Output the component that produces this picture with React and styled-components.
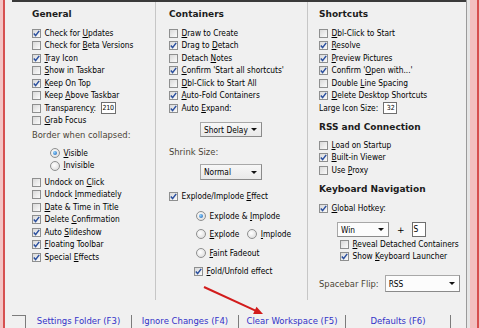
import React from "react";
import styled, { createGlobalStyle } from "styled-components";

const Global = createGlobalStyle`
  html, body { margin: 0; padding: 0; background: #f0f0f0; }
  body { width: 480px; height: 328px; overflow: hidden; }
`;

const LABEL_FONT = `"DejaVu Sans Condensed", "Liberation Sans", sans-serif`;
const VERDANA = `"DejaVu Sans", Verdana, sans-serif`;

const Window = styled.div`
  position: relative;
  display: flex;
  width: 480px;
  height: 328px;
  background: #f0f0f0;
  font-family: ${LABEL_FONT};
  font-size: 8.3px;
  color: #000;
  overflow: hidden;
`;

const LeftEdge = styled.div`
  flex: none;
  width: 5px;
  background: linear-gradient(to right, #f4c4c4 0 3px, #d65050 3px 5px);
`;

const RightEdge = styled.div`
  flex: none;
  width: 14px;
  background: linear-gradient(
    to right,
    #9a9a9a 0 1px,
    #e6e6e6 1px 4px,
    #f3c0c0 4px 11px,
    #d65050 11px 13px,
    #f4c4c4 13px
  );
`;

const Body = styled.div`
  flex: 1;
  min-width: 0;
  display: flex;
  flex-direction: column;
`;

const TopRule = styled.div`
  height: 2px;
  margin-left: 7px;
  background: #3a3a3a;
`;

const Columns = styled.div`
  display: grid;
  grid-template-columns: 151px 152px 1fr;
  align-items: start;
`;

const Column = styled.div`
  box-sizing: border-box;
  height: 298px;
  padding-top: 5px;
  padding-left: ${(p) => p.$pad}px;
  border-right: ${(p) => (p.$divider ? "1px solid #c6c6c6" : "none")};
  display: flex;
  flex-direction: column;
  align-items: flex-start;
`;

const Heading = styled.div`
  font-family: ${VERDANA};
  font-weight: bold;
  font-size: 9px;
  height: 14px;
  line-height: 14px;
  color: #1c1c1c;
  white-space: nowrap;
  margin-top: ${(p) => p.$mt || 0}px;
  margin-bottom: ${(p) => p.$mb || 0}px;
`;

const SubHeading = styled.div`
  font-family: ${VERDANA};
  font-size: 8.4px;
  height: 14px;
  line-height: 14px;
  color: #4b4436;
  white-space: nowrap;
  margin-top: ${(p) => p.$mt || 0}px;
`;

const Row = styled.div`
  display: flex;
  align-items: center;
  gap: ${(p) => p.$gap ?? 3.5}px;
  height: 12.5px;
  line-height: 12.5px;
  white-space: nowrap;
  margin-top: ${(p) => p.$mt || 0}px;
  margin-left: ${(p) => p.$indent || 0}px;
`;

const Opt = styled.span`
  display: flex;
  align-items: center;
  gap: 3.5px;
`;

const Box = styled.span`
  flex: none;
  box-sizing: border-box;
  width: 9px;
  height: 9px;
  border: 1px solid #8e8f8f;
  background: linear-gradient(135deg, #d9d9d9, #fbfbfb);
  display: flex;
  align-items: center;
  justify-content: center;
`;

const Dot = styled.span`
  flex: none;
  box-sizing: border-box;
  width: 10px;
  height: 10px;
  border-radius: 50%;
  border: 1px solid #8e8f8f;
  background: radial-gradient(circle at 40% 40%, #ffffff, #d6d6d6);
  display: flex;
  align-items: center;
  justify-content: center;
  &::after {
    content: "";
    display: ${(p) => (p.$on ? "block" : "none")};
    width: 4px;
    height: 4px;
    border-radius: 50%;
    background: radial-gradient(circle at 35% 35%, #8fd3ff, #1a5cb0);
  }
`;

const Field = styled.span`
  box-sizing: border-box;
  display: inline-flex;
  align-items: center;
  justify-content: ${(p) => p.$align || "flex-start"};
  width: ${(p) => p.$w}px;
  height: ${(p) => p.$h}px;
  padding: 0 1px;
  margin-left: ${(p) => p.$ml || 0}px;
  border: 1px solid #6f6f6f;
  background: #fff;
  font-size: ${(p) => p.$fs || 7}px;
  letter-spacing: ${(p) => (p.$tight ? "-0.3px" : "0")};
  line-height: 1;
  overflow: hidden;
`;

const Select = styled.div`
  box-sizing: border-box;
  display: flex;
  align-items: center;
  justify-content: space-between;
  width: ${(p) => p.$w}px;
  height: ${(p) => p.$h}px;
  margin-top: ${(p) => p.$mt || 0}px;
  margin-left: ${(p) => p.$ml || 0}px;
  padding: 0 4px 0 3px;
  border: 1px solid #8a8a8a;
  border-top-color: #a8a8a8;
  border-left-color: #a8a8a8;
  background: ${(p) => (p.$white ? "#fcfcfc" : "linear-gradient(#f7f7f7, #e9e9e9)")};
  white-space: nowrap;
  font-size: 8.3px;
`;

const Arrow = styled.span`
  width: 0;
  height: 0;
  border-left: 3px solid transparent;
  border-right: 3px solid transparent;
  border-top: 3px solid #111;
`;

const HotkeyLine = styled.div`
  display: flex;
  align-items: center;
  height: 15px;
  margin-top: 7.75px;
  margin-left: 18px;
`;

const Plus = styled.span`
  font-family: ${VERDANA};
  font-size: 9px;
  margin: 0 7px 0 8px;
`;

const FlipLine = styled.div`
  display: flex;
  align-items: center;
  gap: 6px;
  height: 17px;
  margin-top: 12.25px;
`;

const FlipLabel = styled.span`
  font-family: ${VERDANA};
  font-size: 8.4px;
  color: #4b4436;
  white-space: nowrap;
`;

const Bottom = styled.div`
  margin-top: auto;
  height: 15px;
  display: flex;
  align-items: flex-end;
  padding-left: 7px;
`;

const Corner = styled.div`
  box-sizing: border-box;
  width: 14px;
  height: 13px;
  border-top: 1px solid #7c7c7c;
  border-right: 1px solid #7c7c7c;
`;

const Cell = styled.div`
  box-sizing: border-box;
  width: ${(p) => p.$w}px;
  height: 13px;
  line-height: 13px;
  text-align: center;
  border-right: 1px solid #7c7c7c;
  font-family: ${VERDANA};
  font-size: 8.5px;
  color: #3232c8;
  white-space: nowrap;
`;

const Overlay = styled.svg`
  position: absolute;
  left: 0;
  top: 0;
  width: 480px;
  height: 328px;
  pointer-events: none;
`;

const Tick = () => (
  <svg width="7" height="7" viewBox="0 0 7 7">
    <path d="M0.8 3.6 L2.6 5.6 L6.2 0.9" fill="none" stroke="#2a4f9e" strokeWidth="1.5" />
  </svg>
);

const Check = ({ on, children, mt, indent }) => (
  <Row $mt={mt} $indent={indent}>
    <Box>{on && <Tick />}</Box>
    <span>{children}</span>
  </Row>
);

const Radio = ({ on, children, mt, indent }) => (
  <Row $mt={mt} $indent={indent}>
    <Dot $on={on} />
    <span>{children}</span>
  </Row>
);

export default function App() {
  return (
    <>
      <Global />
      <Window>
        <LeftEdge />
        <Body>
          <TopRule />
          <Columns>
            <Column $pad={27} $divider>
              <Heading $mb={5.75}>General</Heading>
              <Check on>Check for <u>U</u>pdates</Check>
              <Check>Check for <u>B</u>eta Versions</Check>
              <Check on><u>T</u>ray Icon</Check>
              <Check><u>S</u>how in Taskbar</Check>
              <Check on><u>K</u>eep On Top</Check>
              <Check>Keep <u>A</u>bove Taskbar</Check>
              <Row>
                <Box />
                <span>Transparenc<u>y</u>:</span>
                <Field $w={15} $h={12} $ml={1} $tight>210</Field>
              </Row>
              <Check><u>G</u>rab Focus</Check>
              <SubHeading $mt={1.25}>Border when collapsed:</SubHeading>
              <Radio on mt={4.75} indent={18}><u>V</u>isible</Radio>
              <Radio indent={18}><u>I</u>nvisible</Radio>
              <Check mt={4}>Undock on <u>C</u>lick</Check>
              <Check>Undock <u>I</u>mmediately</Check>
              <Check><u>D</u>ate &amp; Time in Title</Check>
              <Check on>Delete <u>C</u>onfirmation</Check>
              <Check on>Auto <u>S</u>lideshow</Check>
              <Check on><u>F</u>loating Toolbar</Check>
              <Check on>Special <u>E</u>ffects</Check>
            </Column>

            <Column $pad={13} $divider>
              <Heading $mb={5.75}>Containers</Heading>
              <Check><u>D</u>raw to Create</Check>
              <Check on>Drag to <u>D</u>etach</Check>
              <Check>Detach <u>N</u>otes</Check>
              <Check on><u>C</u>onfirm 'Start all shortcuts'</Check>
              <Check><u>D</u>bl-Click to Start All</Check>
              <Check on><u>A</u>uto-Fold Containers</Check>
              <Check on>Auto <u>E</u>xpand:</Check>
              <Select $w={62} $h={15} $mt={7.75} $ml={31}>
                <span>Short Delay</span>
                <Arrow />
              </Select>
              <SubHeading $mt={8}>Shrink Size:</SubHeading>
              <Select $w={62} $h={16} $mt={5} $ml={31}>
                <span>Normal</span>
                <Arrow />
              </Select>
              <Check on mt={9.75}>Explode/Implode <u>E</u>ffect</Check>
              <Radio on mt={7.5} indent={27}>Explode &amp; <u>I</u>mplode</Radio>
              <Row $mt={5.5} $indent={27} $gap={8}>
                <Opt><Dot /><span><u>E</u>xplode</span></Opt>
                <Opt><Dot /><span><u>I</u>mplode</span></Opt>
              </Row>
              <Radio mt={6.5} indent={27}><u>F</u>aint Fadeout</Radio>
              <Check on mt={5.5} indent={25}><u>F</u>old/Unfold effect</Check>
            </Column>

            <Column $pad={11}>
              <Heading $mb={5.75}>Shortcuts</Heading>
              <Check><u>D</u>bl-Click to Start</Check>
              <Check on><u>R</u>esolve</Check>
              <Check on><u>P</u>review Pictures</Check>
              <Check on>Confirm '<u>O</u>pen with...'</Check>
              <Check>Double <u>L</u>ine Spacing</Check>
              <Check on><u>D</u>elete Desktop Shortcuts</Check>
              <Row>
                <span>Large Icon Size:</span>
                <Field $w={14} $h={12} $ml={1} $align="flex-end">32</Field>
              </Row>
              <Heading $mt={5.75}>RSS and Connection</Heading>
              <Check mt={4.75}><u>L</u>oad on Startup</Check>
              <Check on><u>B</u>uilt-in Viewer</Check>
              <Check>Use <u>P</u>roxy</Check>
              <Heading $mt={5.75}>Keyboard Navigation</Heading>
              <Check on mt={5.75}><u>G</u>lobal Hotkey:</Check>
              <HotkeyLine>
                <Select $w={52} $h={15} $white>
                  <span>Win</span>
                  <Arrow />
                </Select>
                <Plus>+</Plus>
                <Field $w={14} $h={15} $fs={8.3}>S</Field>
              </HotkeyLine>
              <Check mt={0.75} indent={21}><u>R</u>eveal Detached Containers</Check>
              <Check on indent={21}>Show <u>K</u>eyboard Launcher</Check>
              <FlipLine>
                <FlipLabel>Spacebar Flip:</FlipLabel>
                <Select $w={75} $h={17} $white>
                  <span>RSS</span>
                  <Arrow />
                </Select>
              </FlipLine>
            </Column>
          </Columns>

          <Bottom>
            <Corner />
            <Cell $w={106}>Settings Folder (F3)</Cell>
            <Cell $w={107}>Ignore Changes (F4)</Cell>
            <Cell $w={107}>Clear Workspace (F5)</Cell>
            <Cell $w={105}>Defaults (F6)</Cell>
          </Bottom>
        </Body>
        <RightEdge />

        <Overlay viewBox="0 0 480 328">
          <line x1="204" y1="287" x2="256" y2="310.8" stroke="#d21c1c" strokeWidth="2" />
          <polygon points="263,314 253.1,313.9 256.5,306.7" fill="#d21c1c" />
        </Overlay>
      </Window>
    </>
  );
}
